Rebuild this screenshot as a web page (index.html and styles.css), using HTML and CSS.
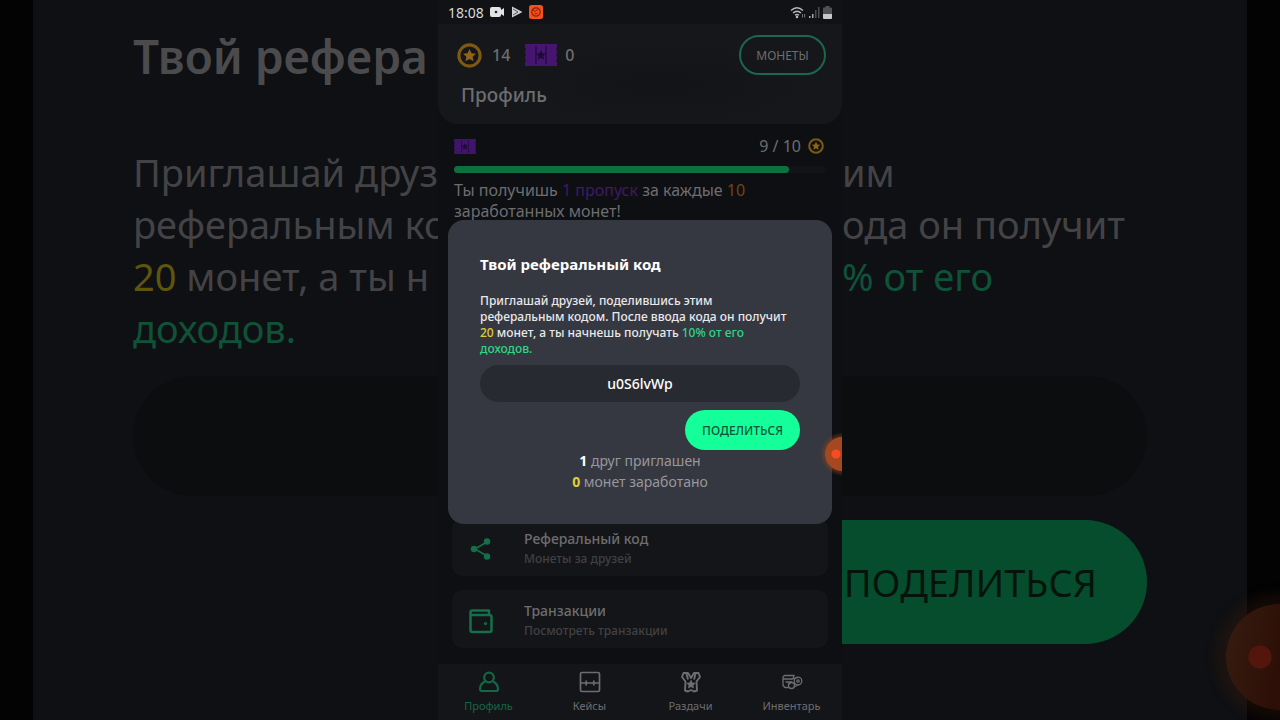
FILE: index.html
```html
<!DOCTYPE html>
<html lang="ru">
<head>
    <meta charset="UTF-8">
    <meta name="viewport" content="width=device-width, initial-scale=1.0">
    <title>Твой реферальный код</title>
    <link rel="stylesheet" href="styles.css">
</head>
<body>
    <div class="stage">
        <div class="side side-left">
            <div class="big-title">Твой рефера</div>
            <div class="big-text">
                <div>Приглашай друз</div>
                <div>реферальным ко</div>
                <div><span class="yellow">20</span> монет, а ты н</div>
                <div class="green">доходов.</div>
            </div>
            <div class="big-field"></div>
        </div>

        <div class="phone">
            <div class="statusbar">
                <span>18:08</span>
                <svg width="15" height="12" viewBox="0 0 15 12"><path d="M2 1h7a2 2 0 0 1 2 2v1l3-2v8l-3-2v1a2 2 0 0 1-2 2H2a2 2 0 0 1-2-2V3a2 2 0 0 1 2-2z" fill="#e4e4e4"/><circle cx="6" cy="6" r="1.3" fill="#222"/></svg>
                <svg width="12" height="12" viewBox="0 0 12 12"><path d="M1 .5 11.500 6 1 11.500z" fill="#d0d0d0"/><path d="M2 3l5 3-5 3" stroke="#555" fill="none"/></svg>
                <svg width="14" height="14" viewBox="0 0 14 14"><rect width="14" height="14" rx="2.500" fill="#f4511e"/><circle cx="7" cy="7" r="4.200" fill="none" stroke="#8d2408" stroke-width="1.200"/><path d="M4 5l2 1.500 3-2M5.500 8.500q1.500 1 3-.5" stroke="#8d2408" fill="none"/></svg>
                <span class="spacer"></span>
                <svg width="16" height="13" viewBox="0 0 16 13" fill="none" stroke="#b8b8b8" stroke-width="1.400"><path d="M1 4.500q6-5.500 12 0M3 7q4-3.700 8 0M5 9.300q2-1.800 4 0"/><path d="M12.500 11.500V8M14.700 8v3.500" stroke="#777" stroke-width="1"/><circle cx="7" cy="11" r=".6"/></svg>
                <svg width="11" height="12" viewBox="0 0 11 12"><path d="M0 10h1.500v2H0zM3 8h1.500v4H3z" fill="#aaa"/><path d="M6 4h1.500v8H6zM9 1h1.500v11H9z" fill="#4c4d50"/></svg>
                <svg width="9" height="13" viewBox="0 0 9 13"><path d="M2.500 0h4v1.500H8A1 1 0 0 1 9 2.500V8H0V2.500a1 1 0 0 1 1-1h1.500z" fill="#505153"/><path d="M0 8h9v4a1 1 0 0 1-1 1H1a1 1 0 0 1-1-1z" fill="#c8c8c8"/></svg>
            </div>

            <header class="header">
                <div class="balance">
                    <svg width="25" height="25" viewBox="0 0 24 24"><circle cx="12" cy="12" r="10.200" fill="#15161a" stroke="#7e5914" stroke-width="3"/><path d="M12 5.800l1.900 4 4.300.5-3.200 3 .9 4.300-3.900-2.200-3.900 2.200.9-4.300-3.200-3 4.300-.5z" fill="#8f6416"/></svg>
                    <span class="coins">14</span>
                    <svg class="ticket" width="32" height="22" viewBox="0 0 32 22"><path d="M0 0h32v4q-2 1.500 0 3v2.500q-2 1.500 0 3V15q-2 1.500 0 3v4H0v-4q2-1.500 0-3v-2.500q2-1.500 0-3V7q2-1.500 0-3z" fill="#451570"/><path d="M11 2v18M21 2v18" stroke="#290b4c" stroke-width="1.500"/><path d="M16 6l1.500 3.300 3.500.4-2.600 2.400.7 3.500-3.100-1.700-3.100 1.700.7-3.500L11 9.700l3.500-.4z" fill="#210a3b"/></svg>
                    <span>0</span>
                    <button class="coins-btn">МОНЕТЫ</button>
                </div>
                <h1>Профиль</h1>
            </header>

            <main class="content">
                <div class="progress-row">
                    <svg width="22" height="15" viewBox="0 0 32 22"><path d="M0 0h32v4q-2 1.500 0 3v2.500q-2 1.500 0 3V15q-2 1.500 0 3v4H0v-4q2-1.500 0-3v-2.500q2-1.500 0-3V7q2-1.500 0-3z" fill="#41146b"/><path d="M11 2v18M21 2v18" stroke="#290b4c" stroke-width="1.500"/><path d="M16 6l1.500 3.300 3.500.4-2.600 2.400.7 3.500-3.100-1.700-3.100 1.700.7-3.500L11 9.700l3.500-.4z" fill="#210a3b"/></svg>
                    <span class="spacer"></span>
                    <span>9 / 10</span>
                    <svg width="16" height="16" viewBox="0 0 24 24"><circle cx="12" cy="12" r="10.200" fill="#111215" stroke="#7e5914" stroke-width="3"/><path d="M12 5.800l1.900 4 4.300.5-3.200 3 .9 4.300-3.900-2.200-3.900 2.200.9-4.300-3.200-3 4.300-.5z" fill="#8f6416"/></svg>
                </div>
                <div class="bar"><div class="bar-fill" style="width: 90%"></div></div>
                <p class="hint">Ты получишь <span class="purple">1 пропуск</span> за каждые <span class="orange">10</span><br>заработанных монет!</p>

                <div class="cards">
                    <a class="card" href="#">
                        <svg width="26" height="26" viewBox="0 0 26 26" fill="#14704a"><path d="M19 6 7 13l12 7" fill="none" stroke="#14704a" stroke-width="1.700"/><circle cx="19" cy="5.500" r="3.200"/><circle cx="6" cy="13" r="3.200"/><circle cx="19" cy="20.500" r="3.200"/></svg>
                        <span><b>Реферальный код</b><small>Монеты за друзей</small></span>
                    </a>
                    <a class="card" href="#">
                        <svg width="26" height="26" viewBox="0 0 26 26" fill="none" stroke="#14704a" stroke-width="2.500" stroke-linejoin="round"><path d="M2.500 7V4.500q0-2 2-2H21V7M2.500 7v15q0 2 2 2h17q2 0 2-2V9q0-2-2-2z"/><circle cx="17.500" cy="15.500" r=".6" stroke-width="2"/></svg>
                        <span><b>Транзакции</b><small>Посмотреть транзакции</small></span>
                    </a>
                </div>
            </main>

            <nav class="nav">
                <a href="#" class="active">
                    <svg width="22" height="22" viewBox="0 0 22 22" fill="none" stroke="currentColor" stroke-width="2.200"><circle cx="11" cy="6.500" r="4.800"/><path d="M7 10.500Q2 13 2 18q0 2 2 2h14q2 0 2-2 0-5-5-7.500"/></svg>
                    Профиль
                </a>
                <a href="#">
                    <svg width="22" height="22" viewBox="0 0 22 22" fill="none" stroke="currentColor" stroke-width="1.700"><rect x="1.500" y="1.500" width="19" height="19" rx="1.500"/><path d="M2 12h4.500M8 12h6M15.500 12H20M7.200 9.500v5M14.800 9.500v5"/></svg>
                    Кейсы
                </a>
                <a href="#">
                    <svg width="22" height="22" viewBox="0 0 22 22" fill="none" stroke="currentColor" stroke-width="1.900" stroke-linejoin="round"><path d="M3.500 2H8l3 5 3-5h4.500L20 6l-3.500 4.500.5 9-3 1-3-1.500-3 1.500-3-1 .5-9L2 6zM6.500 3l1.500 5.500M15.500 3 14 8.500"/><path d="M11 8.500l1.500 3 3.300.4-2.400 2.300.6 3.300-3-1.600-3 1.600.6-3.300-2.400-2.300 3.300-.4z" fill="currentColor" stroke="none"/></svg>
                    Раздачи
                </a>
                <a href="#">
                    <svg width="22" height="22" viewBox="0 0 22 22" fill="none" stroke="currentColor" stroke-width="1.300"><path d="M7.500 16.500H4L2 14.500V6l1.500-1.500H13L12 8H2M4.500 11H10l-3 3M10 8.500l7-2"/><circle cx="17" cy="10" r="3.800"/><circle cx="17" cy="10" r="1.200"/><circle cx="10.500" cy="14.500" r="3"/><path d="M13 16l4-2"/></svg>
                    Инвентарь
                </a>
            </nav>

            <div class="overlay">
                <section class="modal">
                    <h2>Твой реферальный код</h2>
                    <p>Приглашай друзей, поделившись этим<br>реферальным кодом. После ввода кода он получит<br><span class="yellow">20</span> монет, а ты начнешь получать <span class="green">10% от его<br>доходов.</span></p>
                    <input class="code" type="text" value="u0S6lvWp" aria-label="Реферальный код" readonly>
                    <button class="share">ПОДЕЛИТЬСЯ</button>
                    <div class="stats">
                        <div><b>1</b> друг приглашен</div>
                        <div><b class="yellow">0</b> монет заработано</div>
                    </div>
                </section>
            </div>
            <span class="rec"></span>
        </div>

        <div class="side side-right">
            <div class="big-title"></div>
            <div class="big-text">
                <div>им</div>
                <div>ода он получит</div>
                <div class="green">% от его</div>
                <div></div>
            </div>
            <div class="big-field"></div>
            <button class="big-share">ПОДЕЛИТЬСЯ</button>
        </div>
        <span class="big-rec"></span>
    </div>
</body>
</html>
```
FILE: styles.css
```css
* {
    box-sizing: border-box;
}

body {
    margin: 0;
    background: #030304;
    color: #6d6d70;
    font-family: "Noto Sans", "Open Sans", sans-serif;
    overflow: hidden;
}

button,
input {
    font-family: inherit;
}

a {
    color: inherit;
    text-decoration: none;
}

svg {
    flex: none;
}

.spacer {
    flex: 1;
}

.stage {
    position: relative;
    display: grid;
    grid-template-columns: 1fr 404px 1fr;
    height: 100vh;
    padding: 0 33px;
    overflow: hidden;
}

/* dimmed enlarged copy on both sides */
.side {
    background: #0f1013;
    color: #434346;
    overflow: hidden;
    white-space: nowrap;
    padding-top: 24px;
}

.side-left {
    padding-left: 100px;
}

.side-right {
    padding-right: 100px;
}

.big-title {
    height: 64px;
    margin-bottom: 58px;
    font-size: 46px;
    line-height: 64px;
    font-weight: 600;
    color: #4b4b4d;
}

.big-text {
    font-size: 38px;
    line-height: 52px;
}

.big-text div {
    height: 52px;
}

.side .yellow {
    color: #5e560c;
}

.side .green {
    color: #0f5238;
}

.big-field {
    height: 120px;
    margin-top: 22px;
    background: #0c0d0e;
}

.side-left .big-field {
    border-radius: 60px 0 0 60px;
}

.side-right .big-field {
    border-radius: 0 60px 60px 0;
}

.big-share {
    display: flex;
    align-items: center;
    justify-content: flex-end;
    width: 100%;
    height: 124px;
    margin-top: 24px;
    padding: 0 50px 0 0;
    border: 0;
    border-radius: 0 62px 62px 0;
    background: #064d2e;
    color: #04140c;
    font-size: 38px;
}

.big-rec {
    position: absolute;
    right: -52px;
    bottom: 10px;
    width: 106px;
    height: 106px;
    border-radius: 50%;
    background: radial-gradient(circle at 34px 53px, #54150c 11px, transparent 12px), linear-gradient(100deg, #371c10, #2d0f07 50%);
    box-shadow: 0 0 12px 10px rgba(70, 30, 10, 0.25);
}

/* phone screen */
.phone {
    position: relative;
    display: flex;
    flex-direction: column;
    height: 100vh;
    background: #0e0f12;
    overflow: hidden;
}

.statusbar {
    display: flex;
    align-items: center;
    gap: 6px;
    height: 24px;
    padding: 0 10px;
    background: #111216;
    color: #d8d8d8;
    font-size: 14px;
}

.statusbar svg:nth-last-child(-n+2) {
    margin-left: -3px;
}

.header {
    height: 100px;
    padding: 11px 16px 0 19px;
    border-radius: 0 0 20px 20px;
    background: radial-gradient(ellipse at 55% 60%, #131418, #16171b 50%);
}

.balance {
    display: flex;
    align-items: center;
    height: 40px;
    font-size: 16px;
    font-weight: 500;
}

.coins {
    margin-left: 10px;
}

.ticket {
    margin: 0 8px 0 15px;
}

.coins-btn {
    height: 40px;
    width: 87px;
    margin-left: auto;
    padding: 0;
    border: 2px solid #1a6848;
    border-radius: 20px;
    background: none;
    color: #6d6d70;
    font-size: 12px;
}

h1 {
    margin: 6px 4px 0;
    font-size: 19px;
    line-height: 28px;
    font-weight: 500;
}

.content {
    display: flex;
    flex: 1;
    flex-direction: column;
    padding: 10px 14px 16px;
}

.progress-row {
    display: flex;
    align-items: center;
    gap: 7px;
    height: 24px;
    padding: 0 4px 0 2px;
    font-size: 16px;
}

.bar {
    height: 7px;
    margin: 8px 2px 0;
    border-radius: 4px;
    background: #121316;
}

.bar-fill {
    height: 7px;
    border-radius: 4px;
    background: #0d713f;
}

.hint {
    margin: 7px 2px 0;
    font-size: 16px;
    line-height: 21px;
    white-space: nowrap;
}

.purple {
    color: #3f1a65;
}

.orange {
    color: #74430f;
}

.cards {
    display: flex;
    flex-direction: column;
    gap: 14px;
    margin-top: auto;
}

.card {
    display: flex;
    align-items: center;
    gap: 30px;
    height: 58px;
    padding: 3px 16px 0;
    border-radius: 10px;
    background: #141518;
}

.card b,
.card small {
    display: block;
    line-height: 20px;
}

.card b {
    font-size: 14px;
    font-weight: 500;
}

.card small {
    color: #414144;
    font-size: 12px;
    font-weight: 500;
}

.nav {
    display: grid;
    grid-template-columns: repeat(4, 1fr);
    height: 56px;
    background: #141518;
    font-size: 11px;
    line-height: 16px;
}

.nav a {
    display: flex;
    flex-direction: column;
    align-items: center;
    gap: 5px;
    padding-top: 7px;
}

.nav .active {
    color: #126843;
}

/* referral dialog */
.overlay {
    position: absolute;
    inset: 24px 0 0;
    display: flex;
    align-items: center;
    padding: 0 10px;
}

.modal {
    display: flex;
    flex: 1;
    flex-direction: column;
    padding: 33px 32px 32px;
    border-radius: 16px;
    background: #363841;
    color: #e8e8ea;
}

.modal h2 {
    margin: 0 0 18px;
    color: #fff;
    font-size: 15px;
    line-height: 22px;
    font-weight: 700;
}

.modal p {
    margin: 0;
    font-size: 12px;
    line-height: 16px;
    font-weight: 500;
    white-space: nowrap;
}

.modal .yellow {
    color: #e0cd35;
}

.modal .green {
    color: #2fd586;
}

.code {
    width: 100%;
    height: 37px;
    margin-top: 8px;
    border: 0;
    border-radius: 19px;
    background: #282a32;
    color: #fff;
    font-size: 14px;
    font-weight: 500;
    text-align: center;
}

.share {
    align-self: flex-end;
    width: 115px;
    height: 40px;
    margin-top: 8px;
    padding: 0;
    border: 0;
    border-radius: 20px;
    background: #14ff9a;
    color: #0a5636;
    font-size: 12px;
    font-weight: 500;
}

.stats {
    color: #96979d;
    font-size: 14px;
    line-height: 21px;
    text-align: center;
}

.stats b {
    color: #fff;
}

.rec {
    position: absolute;
    top: 437px;
    right: -17px;
    width: 34px;
    height: 34px;
    border-radius: 50%;
    background: radial-gradient(circle at 11px 17px, #fa4a24 4px, transparent 5px), #a5481f;
    box-shadow: 0 0 3px 3px rgba(130, 65, 35, 0.5);
}
```
